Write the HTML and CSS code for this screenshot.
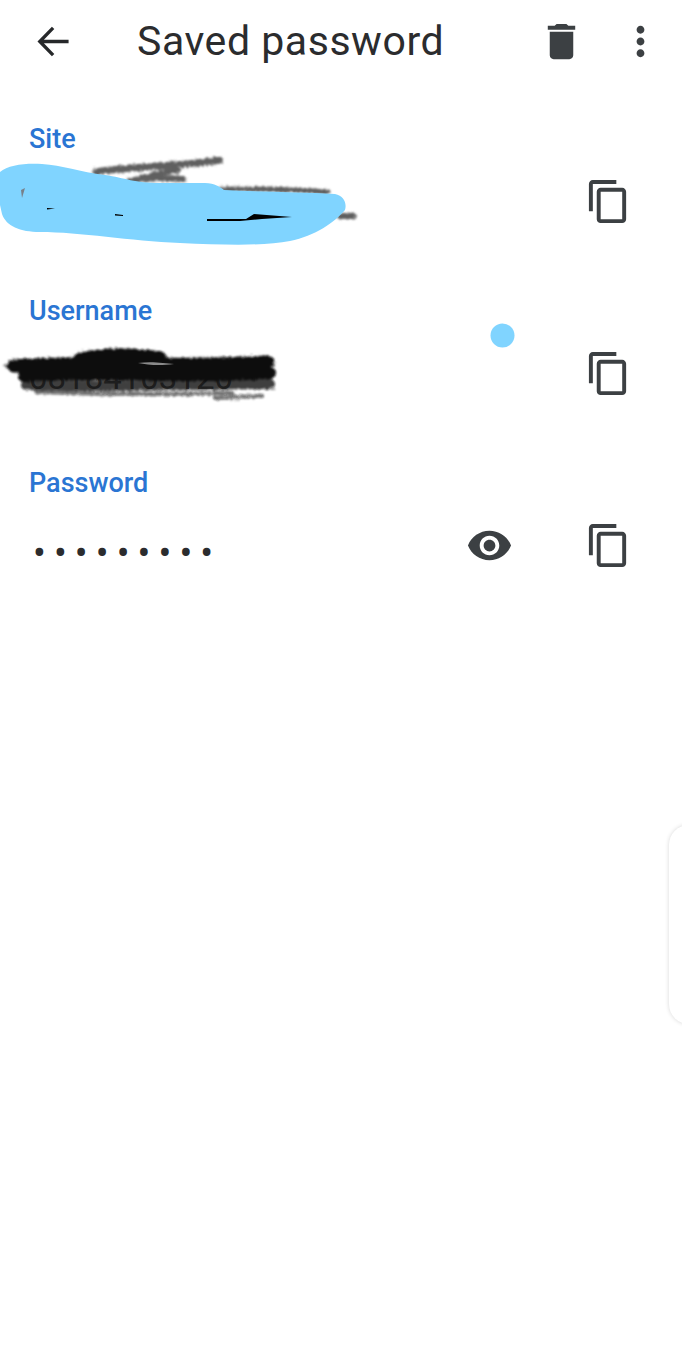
FILE: index.html
```html
<!DOCTYPE html>
<html lang="en">
<head>
<meta charset="utf-8">
<title>Saved password</title>
<link rel="stylesheet" href="styles.css">
</head>
<body>
<div class="page">
  <header class="topbar">
    <button class="icon-btn back" aria-label="Back">
      <svg viewBox="0 0 24 24"><path class="stroke-icon" d="M19.700 12H5.500M11.800 5 5 12l6.800 7"/></svg>
    </button>
    <h1 class="title">Saved password</h1>
    <button class="icon-btn trash" aria-label="Delete">
      <svg viewBox="0 0 24 24"><path d="M6 19c0 1.100.9 2 2 2h8c1.100 0 2-.9 2-2V7H6v12zM19 4h-3.500l-1-1h-5l-1 1H5v2h14V4z"/></svg>
    </button>
    <button class="icon-btn more" aria-label="More options">
      <svg viewBox="0 0 24 24"><path d="M12 8c1.100 0 2-.9 2-2s-.9-2-2-2-2 .9-2 2 .9 2 2 2zm0 2c-1.100 0-2 .9-2 2s.9 2 2 2 2-.9 2-2-.9-2-2-2zm0 6c-1.100 0-2 .9-2 2s.9 2 2 2 2-.9 2-2-.9-2-2-2z"/></svg>
    </button>
  </header>

  <main class="fields">
    <section class="field">
      <div class="label">Site</div>
      <div class="value-row">
        <div class="value"></div>
        <button class="icon-btn copy" aria-label="Copy site">
          <svg viewBox="0 0 24 24"><path d="M16 1H4c-1.100 0-2 .9-2 2v14h2V3h12V1zm3 4H8c-1.100 0-2 .9-2 2v14c0 1.100.9 2 2 2h11c1.100 0 2-.9 2-2V7c0-1.100-.9-2-2-2zm0 16H8V7h11v14z"/></svg>
        </button>
      </div>
    </section>
    <section class="field">
      <div class="label">Username</div>
      <div class="value-row">
        <div class="value username">08184103120</div>
        <button class="icon-btn copy" aria-label="Copy username">
          <svg viewBox="0 0 24 24"><path d="M16 1H4c-1.100 0-2 .9-2 2v14h2V3h12V1zm3 4H8c-1.100 0-2 .9-2 2v14c0 1.100.9 2 2 2h11c1.100 0 2-.9 2-2V7c0-1.100-.9-2-2-2zm0 16H8V7h11v14z"/></svg>
        </button>
      </div>
    </section>
    <section class="field">
      <div class="label">Password</div>
      <div class="value-row">
        <div class="value dots">•••••••••</div>
        <button class="icon-btn eye" aria-label="Show password">
          <svg viewBox="0 0 24 24"><path d="M12 4.500C7 4.500 2.730 7.610 1 12c1.730 4.390 6 7.500 11 7.500s9.270-3.110 11-7.500c-1.730-4.390-6-7.500-11-7.500zM12 17c-2.760 0-5-2.240-5-5s2.240-5 5-5 5 2.240 5 5-2.240 5-5 5zm0-8c-1.660 0-3 1.340-3 3s1.340 3 3 3 3-1.340 3-3-1.340-3-3-3z"/></svg>
        </button>
        <button class="icon-btn copy" aria-label="Copy password">
          <svg viewBox="0 0 24 24"><path d="M16 1H4c-1.100 0-2 .9-2 2v14h2V3h12V1zm3 4H8c-1.100 0-2 .9-2 2v14c0 1.100.9 2 2 2h11c1.100 0 2-.9 2-2V7c0-1.100-.9-2-2-2zm0 16H8V7h11v14z"/></svg>
        </button>
      </div>
    </section>
  </main>

  <svg class="scribbles" viewBox="0 0 682 1351" aria-hidden="true">
    <defs>
      <filter id="rough" x="-10%" y="-40%" width="120%" height="180%">
        <feTurbulence type="fractalNoise" baseFrequency="0.45" numOctaves="2" seed="4"/>
        <feDisplacementMap in="SourceGraphic" scale="5"/>
        <feGaussianBlur stdDeviation="1.100"/>
      </filter>
    </defs>
    <g class="pencil-grey" filter="url(#rough)">
      <path class="g1" d="M96 172 C130 166 180 167 219 160"/>
      <path class="g2" d="M133 181 C150 174 165 172 178 170"/>
      <path class="g2" d="M130 181 C150 177 165 178 183 179"/>
      <path class="g3" d="M222 189 C260 189 300 190 328 192"/>
      <path class="g2" d="M340 216 L353 216"/>
    </g>
    <path class="ink-blue" d="M0 172 C8 165 25 163 42 164 C62 165 80 172 105 175 C125 178 135 183 160 183 L205 183 C215 183 220 187 224 190 C260 192 300 192 335 194 C344 196 347 203 345 210 C335 222 315 236 290 241 C265 246 225 245 180 243 C130 241 80 232 40 232 C20 232 6 226 2 214 L0 205 Z"/>
    <path class="ink-black" d="M207 219 L246 219 L254 214 L292 217 L262 219 L240 221 L207 221 Z"/>
    <path class="ink-black" d="M47 208 L55 208.500 L47 209.500 Z M115 214 L123 215 L123 216 L115 215.500 Z"/>
    <path class="ink-smudge" d="M21 190 L25 188 L22 198 Z"/>
    <g class="pencil-black" filter="url(#rough)">
      <path class="k1" d="M14 366 C80 360 170 368 268 362"/>
      <path class="k1" d="M80 359 C110 353 130 354 160 358"/>
      <path class="k2" d="M24 376 C100 372 190 378 270 373"/>
      <path class="k3" d="M26 385 C100 388 200 384 270 384"/>
      <path class="k4" d="M36 392 C90 394 150 395 232 393"/>
      <path class="k4" d="M215 398 L262 396"/>
      <path class="k4" d="M6 366 L20 365"/>
    </g>
    <path class="glint" d="M138 363 C150 361 165 363 174 364 C160 366 148 365 138 363 Z"/>
    <circle class="ink-blue" cx="502.500" cy="335.500" r="12"/>
  </svg>

  <aside class="edge-panel" aria-hidden="true"></aside>
</div>
</body>
</html>
```

FILE: styles.css
```css
* { box-sizing: border-box; }

html, body {
  margin: 0;
  padding: 0;
  background: #fff;
}

.page {
  position: relative;
  width: 682px;
  height: 1351px;
  overflow: hidden;
  font-family: Roboto, "Liberation Sans", sans-serif;
  color: #2b2c2e;
}

.topbar {
  display: flex;
  align-items: center;
  height: 82px;
  padding-left: 30px;
}

.icon-btn {
  flex: none;
  width: 47px;
  height: 47px;
  padding: 0;
  border: 0;
  background: none;
}

.icon-btn svg {
  display: block;
  width: 100%;
  height: 100%;
  fill: #3c4043;
}

.stroke-icon {
  fill: none;
  stroke: #26282a;
  stroke-width: 1.700;
}

.title {
  margin: 0 0 0 60px;
  width: 401px;
  font-size: 41px;
  font-weight: 400;
  line-height: 47px;
  letter-spacing: 0.55px;
  white-space: nowrap;
}

.trash { margin-right: 32px; }

.fields {
  display: flex;
  flex-direction: column;
  gap: 70px;
  padding: 41px 50px 0 29px;
}

.label {
  height: 32px;
  font-size: 27px;
  font-weight: 500;
  line-height: 32px;
  color: #2a75d3;
}

.value-row {
  display: flex;
  align-items: center;
  height: 47px;
  margin-top: 23px;
}

.value {
  flex: 1;
  font-size: 29px;
  line-height: 47px;
  color: #555;
}

.username {
  padding-top: 8px;
  font-size: 33px;
}

.dots {
  padding: 16px 0 0 4px;
  font-size: 38px;
  letter-spacing: 8.100px;
  color: #2b2c2e;
}

.eye { margin-right: 72px; }

.scribbles {
  position: absolute;
  top: 0;
  left: 0;
  width: 682px;
  height: 1351px;
  pointer-events: none;
}

.ink-blue { fill: #80d4ff; }
.ink-black { fill: #000; }
.ink-smudge { fill: #77808a; }
.glint { fill: #8a8a8a; }

.pencil-grey path,
.pencil-black path {
  fill: none;
  stroke-linecap: round;
}

.pencil-grey path { stroke: #5f5f5f; }
.g1 { stroke-width: 7; }
.g2 { stroke-width: 6; }
.g3 { stroke-width: 5; }

.pencil-black path { stroke: #0d0d0d; }
.k1 { stroke-width: 13; }
.k2 { stroke-width: 12; }
.k3 { stroke-width: 10; opacity: 0.8; }
.k4 { stroke-width: 4; opacity: 0.6; }

.edge-panel {
  position: absolute;
  top: 825px;
  left: 669px;
  width: 40px;
  height: 199px;
  border-radius: 26px;
  background: #fff;
  box-shadow: 0 0 4px rgba(0, 0, 0, 0.16);
}
```
